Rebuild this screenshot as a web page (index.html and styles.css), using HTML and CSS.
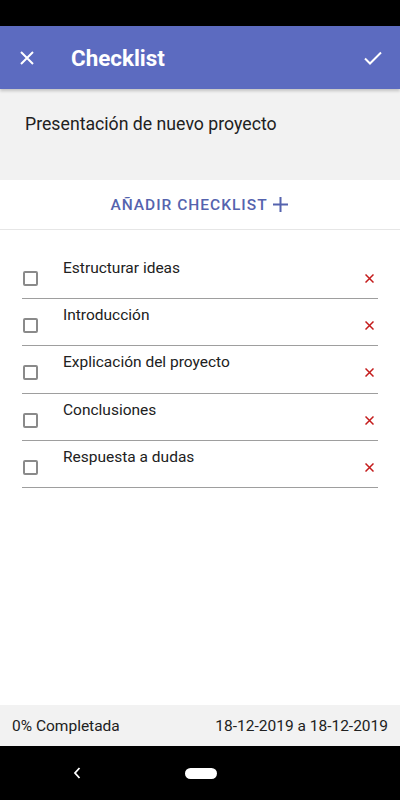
FILE: index.html
```html
<!DOCTYPE html>
<html lang="es">
<head>
    <meta charset="UTF-8">
    <meta name="viewport" content="width=device-width, initial-scale=1.0">
    <title>Checklist</title>
    <link rel="stylesheet" href="styles.css">
</head>
<body>
    <div id="screen">
        <div class="status-bar"></div>
        <div class="app-bar">
            <button class="icon-btn">
                <svg width="14" height="14" viewBox="0 0 14 14"><path d="M1 1L13 13M13 1L1 13" stroke="#fff" stroke-width="2" fill="none"/></svg>
            </button>
            <div class="title">Checklist</div>
            <button class="icon-btn check">
                <svg width="18" height="14" viewBox="0 0 18 14"><path d="M1 7.5L6 12.5L17 1.5" stroke="#fff" stroke-width="2" fill="none"/></svg>
            </button>
        </div>
        <div class="description">Presentación de nuevo proyecto</div>
        <div class="add-row">
            <button class="add-btn">AÑADIR CHECKLIST
                <svg width="15" height="15" viewBox="0 0 15 15"><path d="M7.5 0V15M0 7.5H15" stroke="#5563ae" stroke-width="2" fill="none"/></svg>
            </button>
        </div>
        <div class="list">
            <div class="item">
                <span class="box"></span>
                <span class="label">Estructurar ideas</span>
                <svg class="remove" width="9" height="9" viewBox="0 0 9 9"><path d="M0.5 0.5L8.5 8.5M8.5 0.5L0.5 8.5" stroke="#c41c1c" stroke-width="1.5" fill="none"/></svg>
            </div>
            <div class="item">
                <span class="box"></span>
                <span class="label">Introducción</span>
                <svg class="remove" width="9" height="9" viewBox="0 0 9 9"><path d="M0.5 0.5L8.5 8.5M8.5 0.5L0.5 8.5" stroke="#c41c1c" stroke-width="1.5" fill="none"/></svg>
            </div>
            <div class="item">
                <span class="box"></span>
                <span class="label">Explicación del proyecto</span>
                <svg class="remove" width="9" height="9" viewBox="0 0 9 9"><path d="M0.5 0.5L8.5 8.5M8.5 0.5L0.5 8.5" stroke="#c41c1c" stroke-width="1.5" fill="none"/></svg>
            </div>
            <div class="item">
                <span class="box"></span>
                <span class="label">Conclusiones</span>
                <svg class="remove" width="9" height="9" viewBox="0 0 9 9"><path d="M0.5 0.5L8.5 8.5M8.5 0.5L0.5 8.5" stroke="#c41c1c" stroke-width="1.5" fill="none"/></svg>
            </div>
            <div class="item">
                <span class="box"></span>
                <span class="label">Respuesta a dudas</span>
                <svg class="remove" width="9" height="9" viewBox="0 0 9 9"><path d="M0.5 0.5L8.5 8.5M8.5 0.5L0.5 8.5" stroke="#c41c1c" stroke-width="1.5" fill="none"/></svg>
            </div>
        </div>
        <div class="footer">
            <span>0% Completada</span>
            <span>18-12-2019 a 18-12-2019</span>
        </div>
        <div class="nav-bar">
            <svg class="back" width="8" height="12" viewBox="0 0 8 12"><path d="M6.5 1L2 6L6.5 11" stroke="#fff" stroke-width="1.8" fill="none"/></svg>
            <span class="pill"></span>
        </div>
    </div>
</body>
</html>
```

FILE: styles.css
```css
body, html {
    margin: 0;
    padding: 0;
    font-family: Roboto, "Noto Sans", sans-serif;
    background-color: #ffffff;
}
#screen {
    width: 400px;
    height: 800px;
    display: flex;
    flex-direction: column;
}
.status-bar {
    height: 26px;
    background-color: #000;
}
.app-bar {
    height: 63px;
    background-color: #5c6bc0;
    display: flex;
    align-items: center;
    padding: 0 12px 0 14px;
    box-shadow: 0 2px 3px rgba(0, 0, 0, 0.2);
    position: relative;
    z-index: 1;
}
.icon-btn {
    background: none;
    border: none;
    padding: 6px;
    display: flex;
    cursor: pointer;
}
.title {
    flex: 1;
    margin-left: 31px;
    color: #fff;
    font-size: 22.4px;
    font-weight: bold;
}
.description {
    height: 91px;
    box-sizing: border-box;
    background-color: #f2f2f2;
    padding: 25px 25px 0;
    font-size: 17.7px;
    color: #212121;
}
.add-row {
    height: 49px;
    border-bottom: 1px solid #e6e6e6;
    display: flex;
    justify-content: center;
    align-items: center;
}
.add-btn {
    background: none;
    border: none;
    display: flex;
    align-items: center;
    gap: 5px;
    font-family: Roboto, sans-serif;
    font-size: 15.5px;
    font-weight: 500;
    letter-spacing: 1px;
    color: #5563ae;
    padding: 0;
    margin-left: -2px;
    cursor: pointer;
}
.list {
    flex: 1;
    padding: 22px 22px 0;
}
.item {
    height: 46.2px;
    border-bottom: 1px solid #9e9e9e;
    display: flex;
    position: relative;
}
.box {
    width: 11px;
    height: 11px;
    margin-top: 19px;
    margin-left: 1px;
    border: 2px solid #8a8a8a;
    border-radius: 2px;
}
.label {
    flex: 1;
    margin-left: 25px;
    margin-top: 7px;
    font-size: 15.5px;
    color: #212121;
}
.remove {
    margin-top: 22px;
    margin-right: 4px;
    cursor: pointer;
}
.footer {
    height: 41px;
    background-color: #f2f2f2;
    display: flex;
    justify-content: space-between;
    align-items: center;
    padding: 0 12px;
    font-size: 15.5px;
    color: #212121;
}
.nav-bar {
    height: 54px;
    background-color: #000;
    display: flex;
    align-items: center;
    position: relative;
}
.back {
    margin-left: 73px;
}
.pill {
    width: 32px;
    height: 11px;
    border-radius: 6px;
    background-color: #fff;
    margin-left: 104px;
}
```
